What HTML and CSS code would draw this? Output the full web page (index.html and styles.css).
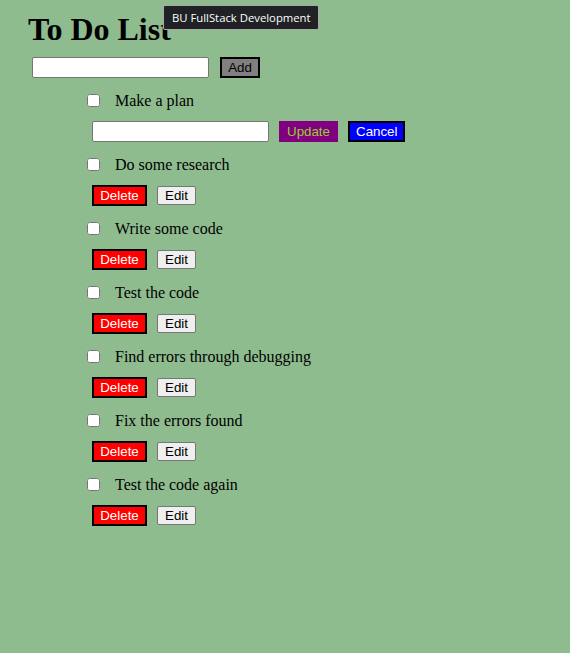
FILE: index.html
```html
<!DOCTYPE html>
<html>
<head>
<meta charset="utf-8">
<title>BU FullStack Development</title>
<link rel="stylesheet" href="styles.css">
</head>
<body>
<div class="app">
  <h1 class="title">To Do List</h1>
  <div class="add-row">
    <input class="text-input" type="text">
    <button class="btn btn-add">Add</button>
  </div>
  <ul class="list">
    <li class="item">
      <div class="task"><input class="check" type="checkbox"><span class="label">Make a plan</span></div>
      <div class="actions">
        <input class="text-input" type="text">
        <button class="btn btn-update">Update</button>
        <button class="btn btn-cancel">Cancel</button>
      </div>
    </li>
    <li class="item">
      <div class="task"><input class="check" type="checkbox"><span class="label">Do some research</span></div>
      <div class="actions"><button class="btn btn-delete">Delete</button><button class="btn btn-edit">Edit</button></div>
    </li>
    <li class="item">
      <div class="task"><input class="check" type="checkbox"><span class="label">Write some code</span></div>
      <div class="actions"><button class="btn btn-delete">Delete</button><button class="btn btn-edit">Edit</button></div>
    </li>
    <li class="item">
      <div class="task"><input class="check" type="checkbox"><span class="label">Test the code</span></div>
      <div class="actions"><button class="btn btn-delete">Delete</button><button class="btn btn-edit">Edit</button></div>
    </li>
    <li class="item">
      <div class="task"><input class="check" type="checkbox"><span class="label">Find errors through debugging</span></div>
      <div class="actions"><button class="btn btn-delete">Delete</button><button class="btn btn-edit">Edit</button></div>
    </li>
    <li class="item">
      <div class="task"><input class="check" type="checkbox"><span class="label">Fix the errors found</span></div>
      <div class="actions"><button class="btn btn-delete">Delete</button><button class="btn btn-edit">Edit</button></div>
    </li>
    <li class="item">
      <div class="task"><input class="check" type="checkbox"><span class="label">Test the code again</span></div>
      <div class="actions"><button class="btn btn-delete">Delete</button><button class="btn btn-edit">Edit</button></div>
    </li>
  </ul>
</div>
<div class="tooltip">BU FullStack Development</div>
</body>
</html>
```
FILE: styles.css
```css
html, body {
  margin: 0;
  padding: 0;
  background: #8fbc8f;
}
body {
  font-family: "Liberation Serif", "Times New Roman", serif;
  color: #000;
  min-height: 653px;
}
.app {
  padding: 11px 0 0 28px;
}
.title {
  margin: 0;
  font-size: 32px;
  font-weight: bold;
  line-height: 37px;
  height: 37px;
}
.add-row {
  display: flex;
  align-items: center;
  gap: 11px;
  margin: 9px 0 0 4px;
  height: 21px;
}
.text-input {
  box-sizing: border-box;
  width: 177px;
  height: 21px;
  margin: 0;
  padding: 1px 2px;
  border: 1px solid #767676;
  border-radius: 2px;
  background: #fff;
  font: 13.33px "Liberation Sans", Arial, sans-serif;
}
.btn {
  box-sizing: border-box;
  margin: 0;
  height: 21px;
  padding: 0 6px;
  font: 13.33px "Liberation Sans", Arial, sans-serif;
  line-height: 17px;
  cursor: pointer;
}
.btn-add {
  width: 40px;
  background: #808080;
  border: 2px solid #000;
  color: #000;
}
.list {
  list-style: none;
  margin: 12px 0 0 0;
  padding: 0 0 0 55px;
}
.item {
  display: flex;
  flex-direction: column;
  height: 64px;
}
.task {
  display: flex;
  align-items: center;
  height: 20px;
  font-size: 16px;
  line-height: 20px;
}
.check {
  width: 13px;
  height: 13px;
  margin: 0 15px 0 4px;
}
.label {
  padding-top: 2px;
}
.actions {
  display: flex;
  align-items: center;
  gap: 10px;
  margin: 11px 0 0 9px;
  height: 21px;
}
.btn-delete {
  width: 55px;
  background: #ff0000;
  color: #fff;
  border: 2px solid #000;
}
.btn-edit {
  width: 39px;
  height: 19px;
  line-height: 17px;
  background: #efefef;
  color: #000;
  border: 1px solid #767676;
  border-radius: 2px;
}
.btn-update {
  width: 59px;
  background: #800080;
  color: #9acd32;
  border: none;
}
.btn-cancel {
  width: 57px;
  background: #0000ff;
  color: #fff;
  border: 2px solid #000;
}
.tooltip {
  position: absolute;
  left: 163px;
  top: 5px;
  box-sizing: border-box;
  width: 156px;
  height: 25px;
  padding: 0 8px;
  background: #202124;
  border: 1px solid #a8a8a8;
  border-radius: 2px;
  color: #fff;
  font: 11.3px "Open Sans", "Noto Sans", sans-serif;
  line-height: 23px;
  white-space: nowrap;
}
```
